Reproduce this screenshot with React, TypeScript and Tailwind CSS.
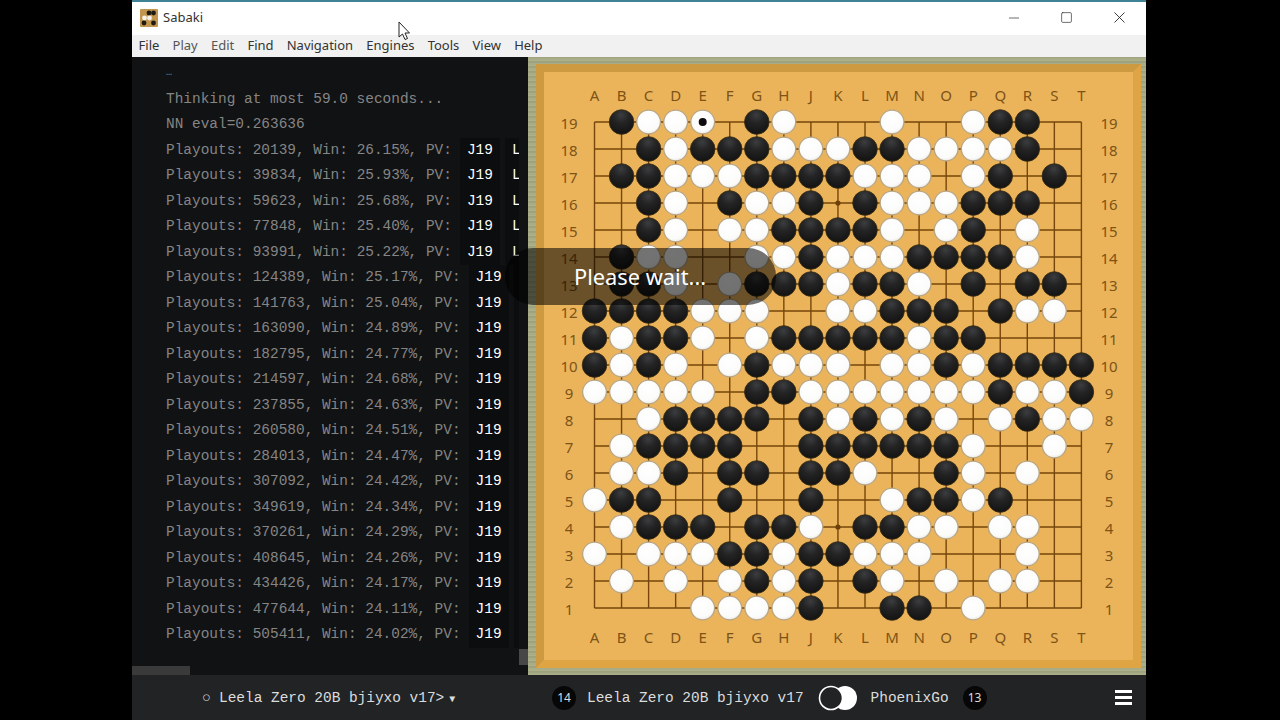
import { FC } from "react";
import { Minus, Square, X } from "lucide-react";

const MENU = ["File", "Play", "Edit", "Find", "Navigation", "Engines", "Tools", "View", "Help"];

const LOG: [string, string][] = [
    ["20139", "26.15"],
    ["39834", "25.93"],
    ["59623", "25.68"],
    ["77848", "25.40"],
    ["93991", "25.22"],
    ["124389", "25.17"],
    ["141763", "25.04"],
    ["163090", "24.89"],
    ["182795", "24.77"],
    ["214597", "24.68"],
    ["237855", "24.63"],
    ["260580", "24.51"],
    ["284013", "24.47"],
    ["307092", "24.42"],
    ["349619", "24.34"],
    ["370261", "24.29"],
    ["408645", "24.26"],
    ["434426", "24.17"],
    ["477644", "24.11"],
    ["505411", "24.02"],
];

const COLS = "ABCDEFGHJKLMNOPQRST".split("");

// row 19 first, one char per column
const POSITION = [
    ".bwww.bw...w..wbb..",
    "..bwbbbwwwbbwwwwb..",
    ".bbwwwbbbbwww.wb.b.",
    "..bw.bwwb.bwwwbbb..",
    "..bw.wwbbbbw.wb.w..",
    ".bww..wwbwwwbbbbw..",
    ".bbw.wbbbwbbw.b.bb.",
    "bbbbwww..wwbbb.bww.",
    "bwbbw.wbbbbbwbb....",
    "bwbw.wbwww.wwbwbbbb",
    "wwwww.bbwwwwwwwbwwb",
    "..wbbbb.bwbwbw.wbww",
    ".wbbbb..bbbbbbw..w.",
    ".wwb.bb.bbw..bw.w..",
    "wbb..b..b..wbbwb...",
    ".wbbb.bbw.bbww.ww..",
    "w.wwwbbwbbwww...w..",
    ".w.w.wbwb.bw.w.ww..",
    "....wwwwb..bb.w....",
];

const colX = (i: number) => 593.5 + i * 27.05;
const rowY = (i: number) => 122 + i * 27;

const Board: FC = () => (
    <svg viewBox="535 64 606 605" className="w-[606px] h-[605px] block">
        <defs>
            <radialGradient id="blackStone" cx="48%" cy="22%" r="80%">
                <stop offset="0%" stopColor="#3c3d3f" />
                <stop offset="40%" stopColor="#242425" />
                <stop offset="100%" stopColor="#121212" />
            </radialGradient>
            <radialGradient id="whiteStone" cx="45%" cy="35%" r="70%">
                <stop offset="0%" stopColor="#ffffff" />
                <stop offset="75%" stopColor="#fbfbfa" />
                <stop offset="100%" stopColor="#e4e2de" />
            </radialGradient>
        </defs>
        {COLS.map((_, i) => (
            <line key={i} x1={colX(i)} x2={colX(i)} y1={rowY(0)} y2={rowY(18)} stroke="#76460a" strokeWidth="1.4" />
        ))}
        {POSITION.map((_, i) => (
            <line key={i} y1={rowY(i)} y2={rowY(i)} x1={colX(0)} x2={colX(18)} stroke="#76460a" strokeWidth="1.4" />
        ))}
        {[3, 9, 15].flatMap(r =>
            [3, 9, 15].map(c => <circle key={`${r}-${c}`} cx={colX(c)} cy={rowY(r)} r="2.6" fill="#6f3f0a" />)
        )}
        {COLS.map((c, i) => (
            <g key={c} className="font-['Noto_Sans','Open_Sans',sans-serif] text-[15px]" fill="#7d5316" textAnchor="middle">
                <text x={colX(i)} y={101}>{c}</text>
                <text x={colX(i)} y={643}>{c}</text>
            </g>
        ))}
        {POSITION.map((_, i) => (
            <g key={i} className="font-['Noto_Sans','Open_Sans',sans-serif] text-[15px]" fill="#7d5316" textAnchor="middle">
                <text x={568} y={rowY(i) + 6.5}>{19 - i}</text>
                <text x={1108} y={rowY(i) + 6.5}>{19 - i}</text>
            </g>
        ))}
        {POSITION.map((row, r) =>
            row.split("").map((s, c) => {
                if (s === ".") return null;
                return s === "b" ? (
                    <circle key={`${r}-${c}`} cx={colX(c)} cy={rowY(r)} r="12.3" fill="url(#blackStone)" stroke="#3a2c12" strokeWidth="0.8" />
                ) : (
                    <circle key={`${r}-${c}`} cx={colX(c)} cy={rowY(r)} r="11.9" fill="url(#whiteStone)" stroke="#b9a582" strokeWidth="1.3" />
                );
            })
        )}
        {/* last move marker on E19 */}
        <circle cx={colX(4)} cy={rowY(0)} r="4" fill="#0c0c0c" />
    </svg>
);

const SabakiIcon: FC = () => (
    <svg viewBox="0 0 18 18" className="w-[18px] h-[18px]">
        <rect width="18" height="18" rx="1" fill="#c2964e" />
        <circle cx="9" cy="4" r="2.4" fill="#1e1a14" />
        <circle cx="13.5" cy="4" r="2.4" fill="#1e1a14" />
        <circle cx="4.5" cy="9" r="2.4" fill="#f5f1e6" />
        <circle cx="9.5" cy="9" r="2.4" fill="#f5f1e6" />
        <circle cx="4" cy="14" r="2.4" fill="#1e1a14" />
        <circle cx="13.5" cy="14" r="2.4" fill="#1e1a14" />
    </svg>
);

const App: FC = () => {
    return (
        <div className="relative w-[1280px] h-[720px] overflow-hidden bg-black pl-[132px] font-['Noto_Sans','Open_Sans',sans-serif]">
            <div className="w-[1014px] h-full flex flex-col">
                {/* title bar */}
                <div className="h-[35px] bg-white border-t-2 border-[#3f8296] flex items-center pl-2 pb-[2px] text-[#333]">
                    <SabakiIcon />
                    <span className="ml-[5px] text-[13px]">Sabaki</span>
                    <div className="ml-auto flex h-full text-[#222]">
                        <div className="w-[53px] flex items-center justify-center"><Minus className="w-[16px] h-[16px]" strokeWidth={1} /></div>
                        <div className="w-[53px] flex items-center justify-center"><Square className="w-[13px] h-[13px]" strokeWidth={1.2} /></div>
                        <div className="w-[53px] flex items-center justify-center"><X className="w-[19px] h-[19px]" strokeWidth={1.1} /></div>
                    </div>
                </div>

                {/* menu */}
                <div className="h-[22px] bg-[#f1f1f1] flex items-center text-[13px] text-[#333]">
                    {MENU.map(m => (
                        <span key={m} className={`px-[6.6px] ${m === "Play" || m === "Edit" ? "text-[#555]" : ""}`}>{m}</span>
                    ))}
                </div>

                <div className="flex-1 flex min-h-0">
                    {/* gtp console */}
                    <div className="w-[396px] bg-[#111213] flex flex-col">
                        <div className="flex-1 min-h-0 flex">
                            <div className="w-[387px] overflow-hidden pl-[34px] pt-[3px] font-['Liberation_Mono',monospace] text-[14.45px] leading-[25.5px] text-[#858585] whitespace-nowrap">
                                <div className="text-[10px] mb-[1px]">…</div>
                                <div>Thinking at most 59.0 seconds...</div>
                                <div>NN eval=0.263636</div>
                                {LOG.map(([playouts, win]) => (
                                    <div key={playouts} className="flex">
                                        <span>Playouts: {playouts}, Win: {win}%, PV:</span>
                                        <span className="ml-2 px-[7px] bg-[#0c0d0e] text-white">J19</span>
                                        <span className="ml-[5px] px-[7px] bg-[#0c0d0e] text-white">L</span>
                                    </div>
                                ))}
                            </div>
                            <div className="w-[9px] flex flex-col justify-end">
                                <div className="h-[16px] bg-[#474747] mb-[1px]" />
                            </div>
                        </div>
                        <div className="h-[9px]">
                            <div className="w-[58px] h-full bg-[#3a3a3a]" />
                        </div>
                    </div>

                    {/* goban on tatami */}
                    <div className="w-[618px] pl-[8px] pt-[7px] bg-[#a3a77e] bg-[repeating-linear-gradient(0deg,#a8ad88_0px,#a8ad88_2px,#949b76_3px,#b4b892_5px)]">
                        <div className="w-[605px] h-[604px] border-[8px] border-t-[#cd9a42] border-l-[#cd9a42] border-r-[#dfa545] border-b-[#dfa545] overflow-hidden">
                            <div className="w-full h-full bg-[#ebb45b] flex items-start">
                                <div className="-ml-[8px] -mt-[8px] shrink-0">
                                    <Board />
                                </div>
                            </div>
                        </div>
                    </div>
                </div>

                {/* bottom bar */}
                <div className="h-[45px] bg-[#212325] flex text-[#dcdcdc]">
                    <div className="w-[396px] flex items-center pl-[70px] pt-[3px] font-['Liberation_Mono',monospace] text-[14.45px] whitespace-nowrap">
                        <span className="w-[17px]">○</span>
                        <span>Leela Zero 20B bjiyxo v17&gt;</span>
                        <span className="ml-[5px] text-[10px]">▼</span>
                    </div>
                    <div className="flex-1 flex items-center pl-[24px] pr-[14px] font-['Liberation_Mono',monospace] text-[14.45px] whitespace-nowrap">
                        <span className="w-[24px] h-[24px] rounded-full bg-[#070707] flex items-center justify-center text-[12px] font-['Noto_Sans',sans-serif]">14</span>
                        <span className="ml-[11px] pt-[3px]">Leela Zero 20B bjiyxo v17</span>
                        <svg viewBox="0 0 40 26" className="ml-[14px] w-[40px] h-[26px]">
                            <circle cx="27" cy="13" r="12" fill="#ffffff" />
                            <circle cx="13" cy="13" r="11.5" fill="#212325" stroke="#ffffff" strokeWidth="1.6" />
                        </svg>
                        <span className="ml-[13px] pt-[3px]">PhoenixGo</span>
                        <span className="ml-[14px] w-[24px] h-[24px] rounded-full bg-[#070707] flex items-center justify-center text-[12px] font-['Noto_Sans',sans-serif]">13</span>
                        <div className="ml-auto w-[17px] flex flex-col gap-[3px]">
                            <div className="h-[3px] bg-white" />
                            <div className="h-[3px] bg-white" />
                            <div className="h-[3px] bg-white" />
                        </div>
                    </div>
                </div>
            </div>

            {/* busy overlay */}
            <div className="absolute left-[505px] top-[248px] w-[271px] h-[57px] rounded-[28px] bg-black/55 flex items-center pl-[69px] pt-[1px] text-[21.8px] text-white">
                Please wait...
            </div>

            {/* mouse pointer */}
            <svg viewBox="0 0 14 20" className="absolute left-[398px] top-[21px] w-[14px] h-[20px]">
                <path d="M1 1 L1 16 L4.5 13 L7 18.5 L9.5 17.5 L7 12 L11.5 12 Z" fill="#ffffff" stroke="#222222" strokeWidth="1" />
            </svg>
        </div>
    );
};

export default App;
